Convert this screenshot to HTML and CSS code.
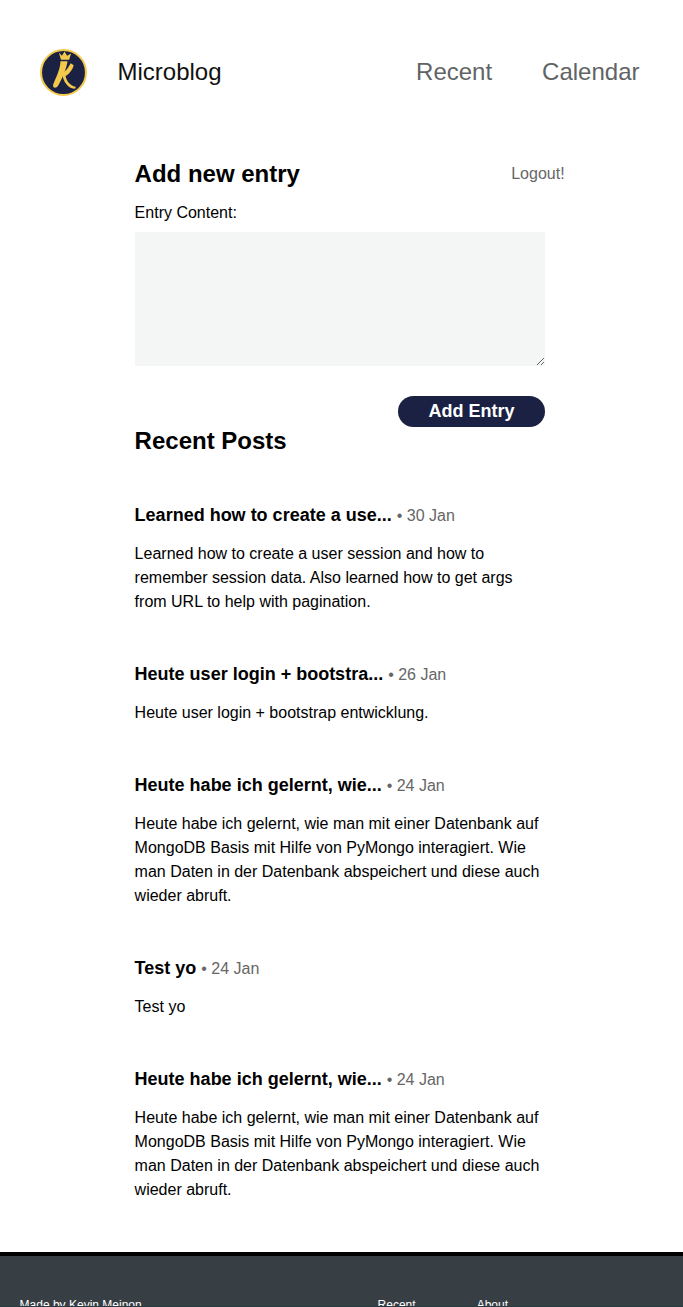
FILE: index.html
```html
<!DOCTYPE html>
<html lang="en">
<head>
<meta charset="utf-8">
<title>Microblog</title>
<link rel="stylesheet" href="styles.css">
</head>
<body>
<header class="site-header">
  <div class="brand">
    <svg class="logo" viewBox="0 0 46 46" width="47" height="47" aria-hidden="true">
      <circle cx="23" cy="23" r="22" fill="#1a2142" stroke="#f2c94c" stroke-width="2"/>
      <path d="M18.500 3.500 L21.500 6.500 L24 2.500 L26.500 6.500 L30.500 4.500 L28.500 10.500 L20.500 10.500 Z" fill="#f2c94c"/>
      <path d="M20 12 L27 12 C26 19 22.500 27 18.500 34.500 C17 38 14 39 13 37 C12.500 35.500 13 34 14 32 C16.500 26 20 19 20 12 Z" fill="#f2c94c"/>
      <path d="M21.500 24 C25 22 28 18 30 14 L33 16 C32 20 28.500 25 25 26.500 C26 31 29 36 35 37 L34.500 39 C28 39 23 33 21.500 24 Z" fill="#f2c94c"/>
    </svg>
    <a class="brand-name" href="#">Microblog</a>
  </div>
  <nav class="main-nav">
    <a href="#">Recent</a>
    <a href="#">Calendar</a>
  </nav>
</header>
<main class="content">
  <section class="composer">
    <div class="composer-head">
      <h2>Add new entry</h2>
      <a class="logout" href="#">Logout!</a>
    </div>
    <label class="field-label" for="entry">Entry Content:</label>
    <textarea id="entry" class="entry-input"></textarea>
    <div class="actions"><button class="btn" type="button">Add Entry</button></div>
  </section>
  <h2 class="recent-title">Recent Posts</h2>
  <article class="post">
    <h3>Learned how to create a use... <span class="date">• 30 Jan</span></h3>
    <p>Learned how to create a user session and how to remember session data. Also learned how to get args from URL to help with pagination.</p>
  </article>
  <article class="post">
    <h3>Heute user login + bootstra... <span class="date">• 26 Jan</span></h3>
    <p>Heute user login + bootstrap entwicklung.</p>
  </article>
  <article class="post">
    <h3>Heute habe ich gelernt, wie... <span class="date">• 24 Jan</span></h3>
    <p>Heute habe ich gelernt, wie man mit einer Datenbank auf MongoDB Basis mit Hilfe von PyMongo interagiert. Wie man Daten in der Datenbank abspeichert und diese auch wieder abruft.</p>
  </article>
  <article class="post">
    <h3>Test yo <span class="date">• 24 Jan</span></h3>
    <p>Test yo</p>
  </article>
  <article class="post">
    <h3>Heute habe ich gelernt, wie... <span class="date">• 24 Jan</span></h3>
    <p>Heute habe ich gelernt, wie man mit einer Datenbank auf MongoDB Basis mit Hilfe von PyMongo interagiert. Wie man Daten in der Datenbank abspeichert und diese auch wieder abruft.</p>
  </article>
</main>
<footer class="site-footer">
  <span class="made">Made by Kevin Meinon</span>
  <div class="footer-links">
    <a href="#">Recent</a>
    <a href="#">About</a>
  </div>
</footer>
</body>
</html>
```
FILE: styles.css
```css
* { box-sizing: border-box; }
html, body { margin: 0; padding: 0; }
body {
  font-family: "Liberation Sans", Arial, sans-serif;
  font-size: 16px;
  line-height: 24px;
  color: #000;
  background: #fff;
  height: 1307px;
  overflow: hidden;
  position: relative;
}
a { text-decoration: none; color: inherit; }
.site-header {
  display: flex;
  justify-content: space-between;
  align-items: center;
  padding: 48px 43.500px 0 40px;
  height: 96px;
}
.brand { display: flex; align-items: center; gap: 30.500px; }
.logo { display: block; }
.brand-name { font-size: 24px; line-height: 28px; color: #111; }
.main-nav { display: flex; gap: 50px; font-size: 24px; line-height: 28px; color: #5f6466; }
.content { width: 410px; margin-left: 135px; padding-top: 64px; }
.composer-head { display: flex; justify-content: space-between; align-items: center; width: 430px; margin-left: -0.400px; }
.composer-head h2 { margin: 0; font-size: 24px; line-height: 28px; font-weight: 700; }
.logout { color: #666; }
.field-label { display: block; margin-top: 13px; margin-bottom: 7px; margin-left: -0.400px; }
.entry-input {
  display: block;
  width: 410px;
  height: 134px;
  margin: 0;
  border: 0;
  background: #f4f5f5;
  padding: 8px;
  font: inherit;
}
.actions { display: flex; justify-content: flex-end; margin-top: 30px; }
.btn {
  width: 147px;
  height: 31px;
  border: 0;
  border-radius: 16px;
  background: #1a2142;
  color: #fff;
  font: 700 18px/20px "Liberation Sans", Arial, sans-serif;
  padding: 0 0 2px;
}
.recent-title { margin: 0 0 48px -0.400px; font-size: 24px; line-height: 28px; font-weight: 700; }
.post { margin: 0 0 48px -0.400px; }
.post h3 { margin: 0 0 14px; font-size: 18px; line-height: 24px; font-weight: 700; }
.post p { margin: 0; }
.date { font-size: 16px; font-weight: 400; color: #666; }
.site-footer {
  position: absolute;
  left: 0; right: 0; top: 1252px;
  height: 55px;
  background: #373e44;
  border-top: 4px solid #000;
  color: #fff;
  font-size: 12px;
  padding-top: 37px;
  padding-left: 19.600px;
  display: flex;
}
.site-footer::after {
  content: "";
  position: absolute;
  left: 0; right: 0; bottom: 0;
  height: 1px;
  background: #263a42;
}
.made { width: 358px; }
.footer-links { display: flex; gap: 61px; }
```
